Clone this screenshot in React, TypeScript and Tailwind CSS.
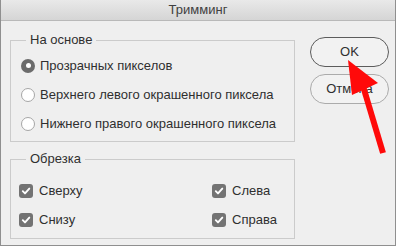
import React from "react";

const font = { fontFamily: '"Liberation Sans", Arial, sans-serif' };

function Radio({ checked, label }: { checked?: boolean; label: string }) {
  return (
    <div className="flex h-[29px] items-center gap-[5px]">
      {checked ? (
        <span className="flex h-[14px] w-[14px] items-center justify-center rounded-full bg-[#6c6c6c]">
          <span className="h-[5px] w-[5px] rounded-full bg-white" />
        </span>
      ) : (
        <span className="h-[14px] w-[14px] rounded-full border border-[#a6a6a6] bg-white" />
      )}
      <span>{label}</span>
    </div>
  );
}

function Check({ label }: { label: string }) {
  return (
    <div className="flex h-[29px] items-center gap-[6px]">
      <span className="flex h-[14px] w-[14px] items-center justify-center rounded-[3px] bg-[#737373]">
        <svg width="10" height="10" viewBox="0 0 10 10">
          <polyline points="1.8,5.2 4,7.4 8.3,2.6" fill="none" stroke="#fff" strokeWidth="1.9" strokeLinecap="round" strokeLinejoin="round" />
        </svg>
      </span>
      <span>{label}</span>
    </div>
  );
}

export default function App() {
  return (
    <div
      className="relative h-[246px] w-[396px] overflow-hidden border-x border-b border-[#8f8f8f] bg-[#efefef] text-[13px] leading-[16px] text-[#2f2f2f]"
      style={font}
    >
      <div className="flex h-[21px] items-center justify-center border-b border-[#b9b9b9] bg-gradient-to-b from-[#e9e9e9] to-[#d5d5d5] text-[13px] text-[#404040]">
        Тримминг
      </div>
      <div className="flex pl-[9px]">
        <div className="flex w-[285px] flex-col pt-[19px]">
          <div className="relative h-[102px] border border-[#cbcbcb] pl-[10px] pt-[10px]">
            <span className="absolute left-[15px] top-[-9px] bg-[#efefef] px-[4px]">На основе</span>
            <Radio checked label="Прозрачных пикселов" />
            <Radio label="Верхнего левого окрашенного пиксела" />
            <Radio label="Нижнего правого окрашенного пиксела" />
          </div>
          <div className="relative mt-[17px] h-[80px] border border-[#cbcbcb] pl-[8px] pt-[16px]">
            <span className="absolute left-[15px] top-[-9px] bg-[#efefef] px-[4px]">Обрезка</span>
            <div className="grid grid-cols-[193px_1fr]">
              <Check label="Сверху" />
              <Check label="Слева" />
              <Check label="Снизу" />
              <Check label="Справа" />
            </div>
          </div>
        </div>
        <div className="ml-[15px] flex flex-col gap-[7px] pt-[16px]">
          <button className="flex h-[30px] w-[79px] items-center justify-center rounded-full border border-[#5c5c5c] bg-[#f2f2f2] text-[#2f2f2f]">
            OK
          </button>
          <button className="flex h-[30px] w-[79px] items-center justify-center rounded-full border border-[#ababab] bg-[#f2f2f2] text-[#2f2f2f]">
            Отмена
          </button>
        </div>
      </div>
      <svg className="pointer-events-none absolute left-0 top-0" width="396" height="246" viewBox="0 0 396 246">
        <line x1="362" y1="86" x2="382" y2="153" stroke="#ff0a0a" strokeWidth="6" />
        <polygon points="347,60 377,83 351,95" fill="#ff0a0a" />
      </svg>
    </div>
  );
}
